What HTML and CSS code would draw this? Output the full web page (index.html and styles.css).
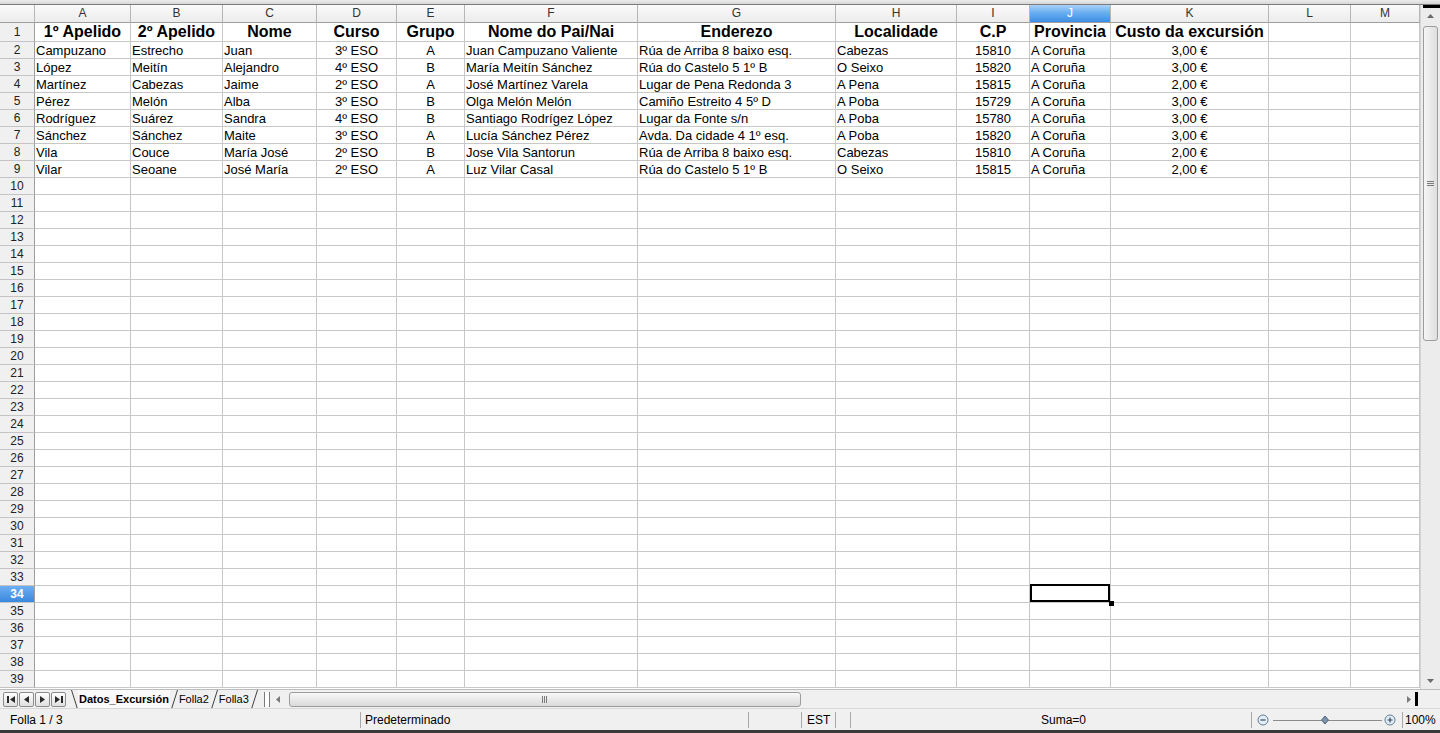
FILE: index.html
```html
<!DOCTYPE html>
<html lang="gl">
<head>
    <meta charset="UTF-8">
    <title>Datos_Excursión - LibreOffice Calc</title>
    <link rel="stylesheet" href="styles.css">
</head>
<body>
<div class="app">
    <div class="top-edge"></div>

    <div class="sheet">
        <div class="grid" id="grid">
            <div class="row col-heads">
                <div class="corner"></div>
                <div class="col-head c-a">A</div>
                <div class="col-head c-b">B</div>
                <div class="col-head c-c">C</div>
                <div class="col-head c-d">D</div>
                <div class="col-head c-e">E</div>
                <div class="col-head c-f">F</div>
                <div class="col-head c-g">G</div>
                <div class="col-head c-h">H</div>
                <div class="col-head c-i">I</div>
                <div class="col-head c-j active">J</div>
                <div class="col-head c-k">K</div>
                <div class="col-head c-l">L</div>
                <div class="col-head c-m">M</div>
            </div>
            <!-- rows get filled in by the script below -->
        </div>

        <div class="vscroll">
            <div class="split-h"></div>
            <div class="sb-btn">
                <svg width="7" height="4" viewBox="0 0 7 4"><path d="M0 4 L3.5 0 L7 4 Z" fill="#6a6a6a"/></svg>
            </div>
            <div class="sb-track">
                <div class="sb-thumb">
                    <svg width="7" height="6" viewBox="0 0 7 6"><path d="M0 0.5 H7 M0 2.5 H7 M0 4.5 H7" stroke="#7a7a7a" stroke-width="1"/></svg>
                </div>
            </div>
            <div class="sb-btn">
                <svg width="7" height="4" viewBox="0 0 7 4"><path d="M0 0 L3.5 4 L7 0 Z" fill="#6a6a6a"/></svg>
            </div>
        </div>
    </div>

    <div class="tabbar">
        <div class="nav-btn">
            <svg width="8" height="7" viewBox="0 0 8 7"><path d="M0 0 H2 V7 H0 Z M8 0 V7 L3 3.5 Z" fill="#2a2a2a"/></svg>
        </div>
        <div class="nav-btn">
            <svg width="5" height="7" viewBox="0 0 5 7"><path d="M5 0 V7 L0 3.5 Z" fill="#2a2a2a"/></svg>
        </div>
        <div class="nav-btn">
            <svg width="5" height="7" viewBox="0 0 5 7"><path d="M0 0 V7 L5 3.5 Z" fill="#2a2a2a"/></svg>
        </div>
        <div class="nav-btn">
            <svg width="8" height="7" viewBox="0 0 8 7"><path d="M0 0 V7 L5 3.5 Z M6 0 H8 V7 H6 Z" fill="#2a2a2a"/></svg>
        </div>

        <div class="tabs">
            <svg class="slant" width="7" height="19" viewBox="0 0 7 19"><path d="M0.5 0 L6.5 19" stroke="#404040"/></svg>
            <div class="tab current">Datos_Excursión</div>
            <svg class="slant" width="8" height="19" viewBox="0 0 8 19"><path d="M1.5 19 L7.5 0" stroke="#404040"/></svg>
            <div class="tab">Folla2</div>
            <svg class="slant" width="8" height="19" viewBox="0 0 8 19"><path d="M1.5 19 L7.5 0" stroke="#404040"/></svg>
            <div class="tab">Folla3</div>
            <svg class="slant" width="8" height="19" viewBox="0 0 8 19"><path d="M1.5 19 L7.5 0" stroke="#404040"/></svg>
        </div>

        <div class="tab-split"></div>
        <div class="hs-arrow">
            <svg width="4" height="7" viewBox="0 0 4 7"><path d="M4 0 V7 L0 3.5 Z" fill="#7a7a7a"/></svg>
        </div>
        <div class="hs-track">
            <div class="hs-thumb">
                <svg width="6" height="7" viewBox="0 0 6 7"><path d="M0.5 0 V7 M2.5 0 V7 M4.5 0 V7" stroke="#7a7a7a"/></svg>
            </div>
        </div>
        <div class="hs-arrow right">
            <svg width="4" height="7" viewBox="0 0 4 7"><path d="M0 0 V7 L4 3.5 Z" fill="#7a7a7a"/></svg>
        </div>
        <div class="split-v"></div>
    </div>

    <div class="statusbar">
        <div class="seg seg-sheet">Folla 1 / 3</div>
        <div class="seg seg-style">Predeterminado</div>
        <div class="seg seg-blank1"></div>
        <div class="seg seg-mode">EST</div>
        <div class="seg seg-blank2"></div>
        <div class="seg seg-sum">Suma=0</div>
        <div class="seg seg-zoom">
            <svg width="151" height="16" viewBox="0 0 151 16">
                <circle cx="11" cy="8" r="5" fill="#e4ecf4" stroke="#5f7d99"/>
                <path d="M8.5 8 H13.5" stroke="#2d4a66" stroke-width="1.2"/>
                <path d="M21 8.5 H130" stroke="#8c8c8c"/>
                <path d="M73 4 L76.5 8 L73 12 L69.5 8 Z" fill="#7d93aa" stroke="#4f6680"/>
                <circle cx="138" cy="8" r="5" fill="#e4ecf4" stroke="#5f7d99"/>
                <path d="M135.5 8 H140.5 M138 5.5 V10.5" stroke="#2d4a66" stroke-width="1.2"/>
            </svg>
        </div>
        <div class="seg seg-zoomval">100%</div>
    </div>

    <div class="taskbar"></div>
</div>

<script>
    const cols = ['a', 'b', 'c', 'd', 'e', 'f', 'g', 'h', 'i', 'j', 'k', 'l', 'm'];
    const centered = { d: true, e: true, i: true, k: true };

    const data = [
        ['1º Apelido', '2º Apelido', 'Nome', 'Curso', 'Grupo', 'Nome do Pai/Nai', 'Enderezo', 'Localidade', 'C.P', 'Provincia', 'Custo da excursión'],
        ['Campuzano', 'Estrecho', 'Juan', '3º ESO', 'A', 'Juan Campuzano Valiente', 'Rúa de Arriba 8 baixo esq.', 'Cabezas', '15810', 'A Coruña', '3,00 €'],
        ['López', 'Meitín', 'Alejandro', '4º ESO', 'B', 'María Meitín Sánchez', 'Rúa do Castelo 5 1º B', 'O Seixo', '15820', 'A Coruña', '3,00 €'],
        ['Martínez', 'Cabezas', 'Jaime', '2º ESO', 'A', 'José Martínez Varela', 'Lugar de Pena Redonda 3', 'A Pena', '15815', 'A Coruña', '2,00 €'],
        ['Pérez', 'Melón', 'Alba', '3º ESO', 'B', 'Olga Melón Melón', 'Camiño Estreito 4 5º D', 'A Poba', '15729', 'A Coruña', '3,00 €'],
        ['Rodríguez', 'Suárez', 'Sandra', '4º ESO', 'B', 'Santiago Rodrígez López', 'Lugar da Fonte s/n', 'A Poba', '15780', 'A Coruña', '3,00 €'],
        ['Sánchez', 'Sánchez', 'Maite', '3º ESO', 'A', 'Lucía Sánchez Pérez', 'Avda. Da cidade 4 1º esq.', 'A Poba', '15820', 'A Coruña', '3,00 €'],
        ['Vila', 'Couce', 'María José', '2º ESO', 'B', 'Jose Vila Santorun', 'Rúa de Arriba 8 baixo esq.', 'Cabezas', '15810', 'A Coruña', '2,00 €'],
        ['Vilar', 'Seoane', 'José María', '2º ESO', 'A', 'Luz Vilar Casal', 'Rúa do Castelo 5 1º B', 'O Seixo', '15815', 'A Coruña', '2,00 €']
    ];

    const grid = document.getElementById('grid');

    for (let r = 1; r <= 39; r++) {
        const row = document.createElement('div');
        row.className = 'row' + (r === 1 ? ' title-row' : '');

        const head = document.createElement('div');
        head.className = 'row-head' + (r === 34 ? ' active' : '');
        head.textContent = r;
        row.appendChild(head);

        const values = data[r - 1] || [];
        cols.forEach((c, i) => {
            const cell = document.createElement('div');
            cell.className = 'cell c-' + c;
            if (centered[c]) cell.classList.add('center');
            if (values[i]) cell.textContent = values[i];
            if (r === 34 && c === 'j') cell.classList.add('selected');
            row.appendChild(cell);
        });

        grid.appendChild(row);
    }
</script>
</body>
</html>
```

FILE: styles.css
```css
* {
    box-sizing: border-box;
}
html, body {
    margin: 0;
    padding: 0;
}
body {
    width: 1440px;
    height: 733px;
    overflow: hidden;
    background: #fff;
    font-family: "Liberation Sans", Arial, sans-serif;
}
.app {
    display: flex;
    flex-direction: column;
    height: 733px;
}
.top-edge {
    flex: none;
    height: 5px;
    background: linear-gradient(#ececec, #d6d6d6);
    border-bottom: 1px solid #7c7c7c;
}

/* grid */
.sheet {
    flex: none;
    display: flex;
    height: 684px;
}
.grid {
    width: 1420px;
    overflow: hidden;
    background: #fff;
}
.row {
    display: flex;
    height: 17px;
}
.col-heads {
    height: 18px;
}
.title-row {
    height: 19px;
}
.corner,
.col-head {
    flex: none;
    background: linear-gradient(#fafafa, #ececec);
    border-right: 1px solid #b6b6b6;
    border-bottom: 1px solid #9e9e9e;
    font-size: 12px;
    line-height: 17px;
    color: #333;
    text-align: center;
}
.corner {
    width: 35px;
}
.col-head.active {
    background: linear-gradient(#a9d2f8, #6aaef0 45%, #3d8ee4);
    color: #fff;
}
.row-head {
    flex: none;
    width: 35px;
    background: #f0f0f0;
    border-right: 1px solid #9e9e9e;
    border-bottom: 1px solid #c4c4c4;
    padding-top: 1px;
    font-size: 12px;
    line-height: 15px;
    color: #222;
    text-align: center;
}
.title-row .row-head {
    padding-top: 0;
    line-height: 18px;
}
.row-head.active {
    background: linear-gradient(#6eaef2, #3a89df);
    color: #fff;
    font-weight: bold;
}
.cell {
    flex: none;
    border-right: 1px solid #c8c8c8;
    border-bottom: 1px solid #c8c8c8;
    padding: 1px 1px 0;
    font-size: 13px;
    line-height: 15px;
    color: #000;
    white-space: nowrap;
    overflow: hidden;
}
.title-row .cell {
    padding-top: 0;
    font-size: 16px;
    font-weight: bold;
    line-height: 18px;
    text-align: center;
}
.center {
    text-align: center;
}
.cell.selected {
    position: relative;
    overflow: visible;
    z-index: 2;
}
.cell.selected::after {
    content: "";
    position: absolute;
    top: -2px;
    left: 0;
    right: 0;
    bottom: 0;
    border: 2px solid #000;
}
.cell.selected::before {
    content: "";
    position: absolute;
    right: -4px;
    bottom: -4px;
    width: 5px;
    height: 5px;
    background: #000;
}

.c-a { width: 96px; }
.c-b { width: 92px; }
.c-c { width: 94px; }
.c-d { width: 80px; }
.c-e { width: 68px; }
.c-f { width: 173px; }
.c-g { width: 198px; }
.c-h { width: 121px; }
.c-i { width: 73px; }
.c-j { width: 81px; }
.c-k { width: 158px; }
.c-l { width: 82px; }
.c-m { width: 69px; }

/* vertical scrollbar */
.vscroll {
    flex: none;
    width: 20px;
    display: flex;
    flex-direction: column;
    background: #ececec;
    border-left: 1px solid #d4d4d4;
}
.split-h {
    height: 3px;
    margin-left: 2px;
    background: #000;
}
.sb-btn {
    height: 16px;
    display: flex;
    align-items: center;
    justify-content: center;
}
.sb-track {
    flex: 1;
    padding: 2px 2px 0 2px;
}
.sb-thumb {
    height: 315px;
    border: 1px solid #9c9c9c;
    border-radius: 3px;
    background: linear-gradient(90deg, #f6f6f6, #dedede);
    display: flex;
    align-items: center;
    justify-content: center;
}

/* sheet tabs + horizontal scrollbar */
.tabbar {
    flex: none;
    height: 19px;
    display: flex;
    align-items: center;
    padding-left: 3px;
    background: #f0f0f0;
    border-top: 1px solid #bcbcbc;
}
.nav-btn {
    flex: none;
    width: 15px;
    height: 15px;
    margin-right: 1px;
    border: 1px solid #8c8c8c;
    border-radius: 2px;
    background: linear-gradient(#fdfdfd, #e0e0e0);
    display: flex;
    align-items: center;
    justify-content: center;
}
.tabs {
    display: flex;
    align-items: center;
    height: 18px;
    margin-left: 4px;
}
.slant {
    flex: none;
    display: block;
}
.tab {
    font-size: 11px;
    line-height: 18px;
    color: #000;
    padding: 0 1px;
}
.tab.current {
    font-weight: bold;
    background: #fafafa;
}
.tab-split {
    flex: none;
    width: 6px;
    height: 15px;
    margin-left: 6px;
    border-left: 1px solid #7a7a7a;
    border-right: 1px solid #7a7a7a;
    background: #fff;
}
.hs-arrow {
    flex: none;
    width: 16px;
    display: flex;
    align-items: center;
    justify-content: center;
}
.hs-track {
    flex: 1;
    height: 15px;
    padding-left: 3px;
}
.hs-thumb {
    width: 512px;
    height: 15px;
    border: 1px solid #9c9c9c;
    border-radius: 3px;
    background: linear-gradient(#f8f8f8, #dadada);
    display: flex;
    align-items: center;
    justify-content: center;
}
.hs-arrow.right {
    width: 10px;
}
.split-v {
    flex: none;
    width: 3px;
    height: 14px;
    margin: 0 22px 0 1px;
    background: #000;
}

/* status bar */
.statusbar {
    flex: none;
    height: 22px;
    display: flex;
    align-items: center;
    background: #f0f0f0;
    border-top: 1px solid #d8d8d8;
    font-size: 12px;
    color: #000;
}
.seg {
    flex: none;
    height: 16px;
    line-height: 16px;
    border-left: 1px solid #a8a8a8;
    white-space: nowrap;
}
.seg-sheet {
    width: 360px;
    padding-left: 10px;
    border-left: none;
}
.seg-style {
    width: 388px;
    padding-left: 4px;
}
.seg-blank1 {
    width: 53px;
}
.seg-mode {
    width: 34px;
    padding-left: 5px;
}
.seg-blank2 {
    width: 15px;
}
.seg-sum {
    width: 401px;
    padding-left: 190px;
}
.seg-zoom {
    width: 151px;
}
.seg-zoom svg {
    display: block;
}
.seg-zoomval {
    flex: 1;
    padding-left: 2px;
}
.taskbar {
    flex: none;
    height: 3px;
    background: #3a3a3a;
}
```
